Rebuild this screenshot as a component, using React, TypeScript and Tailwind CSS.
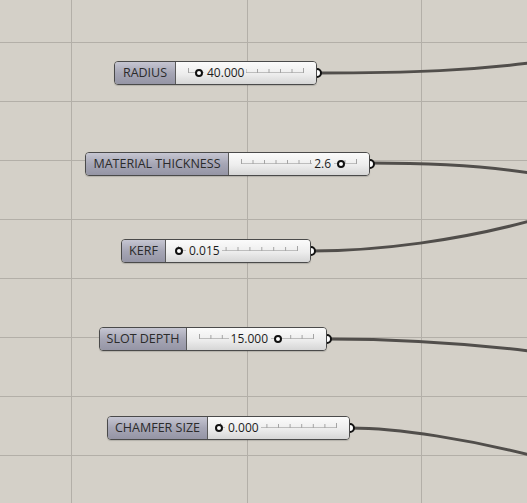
import React from "react";

type S = {
  label: string;
  value: string;
  pos: string;
  labelW: string;
  valueW: number;
  valueWCls: string;
  knobCls: string;
  textCls: string;
};

const sliders: S[] = [
  { label: "RADIUS", value: "40.000", pos: "left-[114px] top-[61px]", labelW: "w-[61px]", valueW: 140, valueWCls: "w-[140px]", knobCls: "left-[19px]", textCls: "left-[28px] pl-[3px] pr-[2px]" },
  { label: "MATERIAL THICKNESS", value: "2.6", pos: "left-[85px] top-[152px]", labelW: "w-[143px]", valueW: 140, valueWCls: "w-[140px]", knobCls: "left-[108px]", textCls: "right-[35px] pr-[3px] pl-[2px]" },
  { label: "KERF", value: "0.015", pos: "left-[121px] top-[239px]", labelW: "w-[44px]", valueW: 144, valueWCls: "w-[144px]", knobCls: "left-[9px]", textCls: "left-[20px] pl-[3px] pr-[2px]" },
  { label: "SLOT DEPTH", value: "15.000", pos: "left-[99px] top-[327px]", labelW: "w-[87px]", valueW: 139, valueWCls: "w-[139px]", knobCls: "left-[87px]", textCls: "right-[55px] pr-[3px] pl-[2px]" },
  { label: "CHAMFER SIZE", value: "0.000", pos: "left-[107px] top-[416px]", labelW: "w-[100px]", valueW: 141, valueWCls: "w-[141px]", knobCls: "left-[7px]", textCls: "left-[17px] pl-[3px] pr-[2px]" },
];

function Ticks({ w }: { w: number }) {
  const x0 = 12;
  const x1 = w - 13;
  const n = 10;
  const ticks = [];
  for (let i = 0; i <= n; i++) {
    const x = x0 + ((x1 - x0) * i) / n;
    ticks.push(<line key={i} x1={x + 0.5} x2={x + 0.5} y1={i === 0 || i === n ? 6 : 7} y2={11} stroke="#a4a4a4" strokeWidth={1} />);
  }
  return (
    <svg className="absolute left-0 top-0" width={w} height={22}>
      <line x1={x0} x2={x1 + 1} y1={10.5} y2={10.5} stroke="#bdbdbd" strokeWidth={1} />
      {ticks}
    </svg>
  );
}

function Slider({ s }: { s: S }) {
  return (
    <div className={`absolute ${s.pos} h-[24px] flex`}>
      <div className="absolute right-[-5px] top-[7px] w-[10px] h-[10px] rounded-full border-2 border-[#111] bg-white" />
      <div className="relative flex h-[24px] rounded-[4px] border border-[#4a4a4a] overflow-hidden shadow-[0_1px_1px_rgba(0,0,0,0.15)]">
        <div className={`${s.labelW} h-full flex items-center justify-center bg-[linear-gradient(to_bottom,#c6c6d2,#a6a6b5_50%,#9595a5)] border-r border-[#5a5a5a] text-[12.5px] text-[#2b2b2b] font-['Open_Sans',sans-serif] leading-none`}>
          {s.label}
        </div>
        <div className={`relative ${s.valueWCls} h-full bg-[linear-gradient(to_bottom,#fbfbfb,#ededed_55%,#d6d6d6)]`}>
          <Ticks w={s.valueW} />
          <div className={`absolute ${s.textCls} top-0 h-[22px] flex items-center bg-[linear-gradient(to_bottom,#fbfbfb,#ededed_55%,#d6d6d6)] text-[12px] text-[#1c1c1c] font-['Open_Sans',sans-serif] leading-none`}>
            {s.value}
          </div>
          <div className={`absolute ${s.knobCls} top-[7px] w-[8px] h-[8px] rounded-full border-2 border-[#111] bg-white`} />
        </div>
      </div>
    </div>
  );
}

export default function App() {
  const hLines = [42, 101, 160, 219, 278, 337, 396, 455];
  const vLines = [71, 247, 421];
  return (
    <div className="relative w-[527px] h-[503px] overflow-hidden bg-[#d4d0c8]">
      <svg className="absolute left-0 top-0" width={527} height={503}>
        {hLines.map((y) => (
          <line key={"h" + y} x1={0} x2={527} y1={y + 0.5} y2={y + 0.5} stroke="#b3afa8" strokeWidth={1} />
        ))}
        {vLines.map((x) => (
          <line key={"v" + x} x1={x + 0.5} x2={x + 0.5} y1={0} y2={503} stroke="#b3afa8" strokeWidth={1} />
        ))}
        <g fill="none" stroke="#514e4b" strokeWidth={3} strokeLinecap="round">
          <path d="M318,73 C420,73 470,70 530,63" />
          <path d="M370,163 C430,163 480,165 530,173" />
          <path d="M312,251 C380,251 460,240 530,221" />
          <path d="M329,339 C400,339 470,344 530,351" />
          <path d="M350,428 C400,428 470,440 530,455" />
        </g>
      </svg>
      {sliders.map((s) => (
        <Slider key={s.label} s={s} />
      ))}
    </div>
  );
}
